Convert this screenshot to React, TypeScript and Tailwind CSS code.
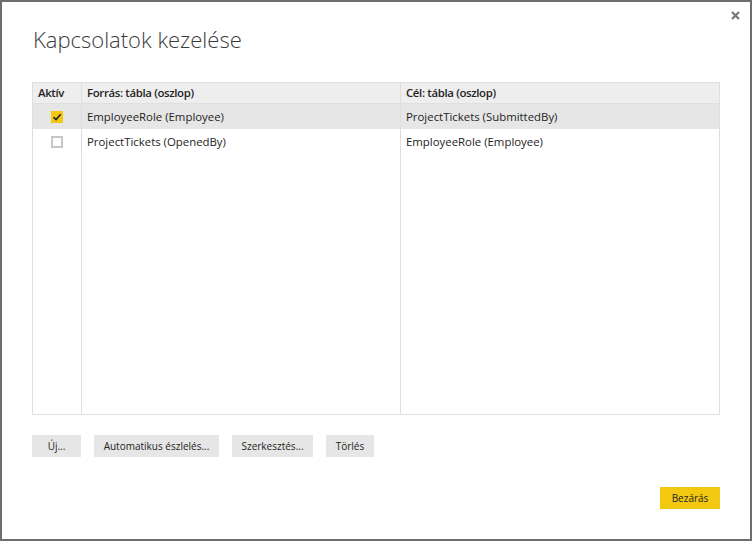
import React from "react";

const font = { fontFamily: '"Open Sans", "Noto Sans", sans-serif' };

function Check({ checked }: { checked: boolean }) {
  if (checked) {
    return (
      <div className="w-[12px] h-[12px] bg-[#f2c811] flex items-center justify-center">
        <svg width="10" height="10" viewBox="0 0 10 10">
          <path d="M1.5 5.2 L4 7.6 L8.7 2.2" stroke="#222" strokeWidth="1.6" fill="none" />
        </svg>
      </div>
    );
  }
  return <div className="w-[12px] h-[12px] border-2 border-[#c6c6c6] bg-white" />;
}

const rows = [
  { active: true, src: "EmployeeRole (Employee)", dst: "ProjectTickets (SubmittedBy)" },
  { active: false, src: "ProjectTickets (OpenedBy)", dst: "EmployeeRole (Employee)" },
];

export default function App() {
  return (
    <div
      className="w-[752px] h-[541px] bg-white border-2 border-[#6e6e6e] relative text-[#252423]"
      style={font}
    >
      <div className="absolute right-[10px] top-[9px]">
        <svg width="9" height="9" viewBox="0 0 9 9">
          <path d="M1 1 L8 8 M8 1 L1 8" stroke="#777" strokeWidth="2.2" />
        </svg>
      </div>
      <div className="pl-[31px] pt-[21px] text-[22px] leading-[32px] font-light text-[#3b3b3b]">
        Kapcsolatok kezelése
      </div>
      <div className="ml-[30px] mt-[27px] w-[688px] h-[333px] border border-[#dedede] flex flex-col text-[11.4px]">
        <div className="flex h-[21px] bg-[#eeeeee] border-b border-[#e0e0e0] font-semibold tracking-[-0.35px]">
          <div className="w-[49px] border-r border-[#dedede] pl-[5px] flex items-center">Aktív</div>
          <div className="w-[319px] border-r border-[#dedede] pl-[5px] flex items-center">Forrás: tábla (oszlop)</div>
          <div className="flex-1 pl-[5px] flex items-center">Cél: tábla (oszlop)</div>
        </div>
        <div className="flex flex-1">
          <div className="w-[49px] border-r border-[#dedede] flex flex-col">
            {rows.map((r, i) => (
              <div key={i} className={`h-[25px] flex items-center justify-center ${r.active ? "bg-[#e6e6e6]" : ""}`}>
                <Check checked={r.active} />
              </div>
            ))}
          </div>
          <div className="w-[319px] border-r border-[#dedede] flex flex-col">
            {rows.map((r, i) => (
              <div key={i} className={`h-[25px] flex items-center pl-[5px] ${r.active ? "bg-[#e6e6e6]" : ""}`}>
                {r.src}
              </div>
            ))}
          </div>
          <div className="flex-1 flex flex-col">
            {rows.map((r, i) => (
              <div key={i} className={`h-[25px] flex items-center pl-[5px] ${r.active ? "bg-[#e6e6e6]" : ""}`}>
                {r.dst}
              </div>
            ))}
          </div>
        </div>
      </div>
      <div className="ml-[30px] mt-[20px] flex gap-[13px] text-[10px] whitespace-nowrap">
        <button className="w-[49px] h-[22px] bg-[#e6e6e6]">Új...</button>
        <button className="w-[125px] h-[22px] bg-[#e6e6e6]">Automatikus észlelés...</button>
        <button className="w-[81px] h-[22px] bg-[#e6e6e6]">Szerkesztés...</button>
        <button className="w-[48px] h-[22px] bg-[#e6e6e6]">Törlés</button>
      </div>
      <div className="flex justify-end mr-[30px] mt-[30px] text-[10px]">
        <button className="w-[60px] h-[22px] bg-[#f2c811]">Bezárás</button>
      </div>
    </div>
  );
}
